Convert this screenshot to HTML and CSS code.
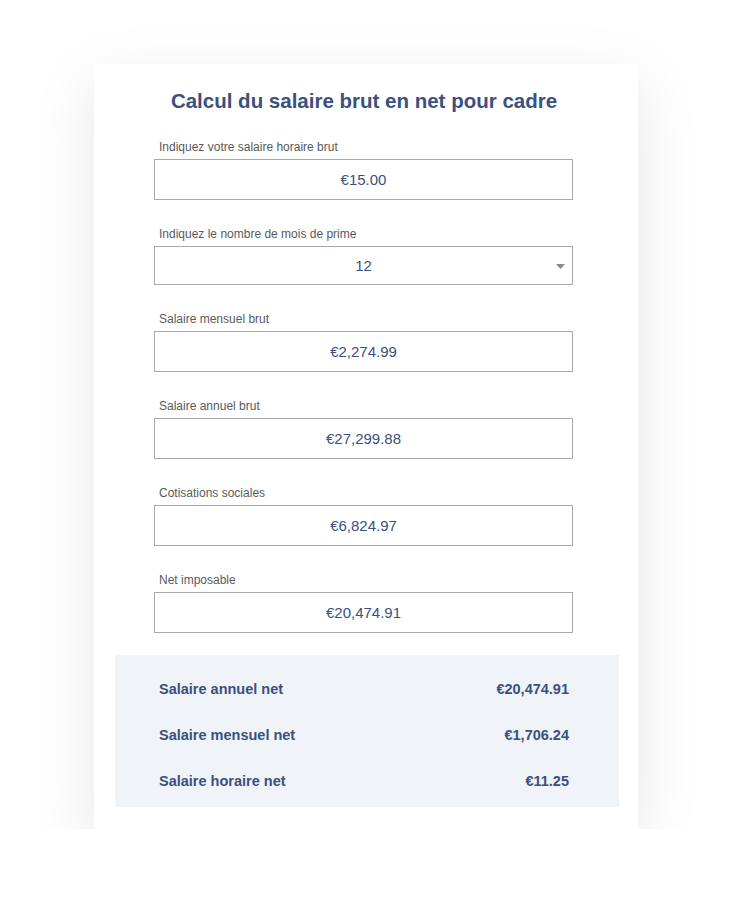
FILE: index.html
```html
<!DOCTYPE html>
<html lang="fr">
<head>
    <meta charset="UTF-8">
    <meta name="viewport" content="width=device-width, initial-scale=1.0">
    <title>Calcul du salaire brut en net pour cadre</title>
    <link rel="stylesheet" href="styles.css">
</head>
<body>
    <div class="card">
        <h1>Calcul du salaire brut en net pour cadre</h1>

        <div class="fields">
            <div class="field">
                <label for="horaire">Indiquez votre salaire horaire brut</label>
                <div class="box" id="horaire">€15.00</div>
            </div>
            <div class="field">
                <label for="prime">Indiquez le nombre de mois de prime</label>
                <div class="box select" id="prime">12
                    <svg class="caret" width="9" height="5" viewBox="0 0 9 5"><path d="M0 0h9L4.5 5z" fill="#8a8a8a"/></svg>
                </div>
            </div>
            <div class="field">
                <label>Salaire mensuel brut</label>
                <div class="box">€2,274.99</div>
            </div>
            <div class="field">
                <label>Salaire annuel brut</label>
                <div class="box">€27,299.88</div>
            </div>
            <div class="field">
                <label>Cotisations sociales</label>
                <div class="box">€6,824.97</div>
            </div>
            <div class="field">
                <label>Net imposable</label>
                <div class="box">€20,474.91</div>
            </div>
        </div>

        <div class="results">
            <div class="row"><span>Salaire annuel net</span><span>€20,474.91</span></div>
            <div class="row"><span>Salaire mensuel net</span><span>€1,706.24</span></div>
            <div class="row"><span>Salaire horaire net</span><span>€11.25</span></div>
        </div>
    </div>
</body>
</html>
```

FILE: styles.css
```css
body {
    margin: 0;
    background-color: #ffffff;
    font-family: "Liberation Sans", Arial, sans-serif;
}

.card {
    width: 544px;
    margin: 64px 0 0 94px;
    padding: 22px 0 22px 0;
    background-color: #ffffff;
    box-shadow: 0 18px 60px rgba(0, 0, 0, 0.1);
    box-sizing: border-box;
}

h1 {
    margin: 0;
    padding-right: 4px;
    text-align: center;
    font-size: 20.5px;
    line-height: 30px;
    color: #3b5080;
}

.fields {
    width: 419px;
    margin: 24px 0 0 60px;
}

.field {
    margin-bottom: 27px;
}

.field:last-child {
    margin-bottom: 0;
}

.field label {
    display: block;
    padding-left: 5px;
    font-size: 12px;
    line-height: 14px;
    color: #5a5a5a;
    margin-bottom: 5px;
}

.box {
    position: relative;
    height: 41px;
    border: 1px solid #a9a9a9;
    box-sizing: border-box;
    text-align: center;
    font-size: 15px;
    line-height: 39px;
    color: #3b5080;
}

.select {
    height: 39px;
    line-height: 37px;
}

.caret {
    position: absolute;
    right: 7px;
    top: 17px;
}

.results {
    margin: 22px 19px 0 21px;
    padding: 11px 50px 3px 44px;
    background-color: #f0f3f7;
}

.row {
    display: flex;
    justify-content: space-between;
    font-size: 14.5px;
    font-weight: bold;
    line-height: 46px;
    color: #3b5080;
}
```
